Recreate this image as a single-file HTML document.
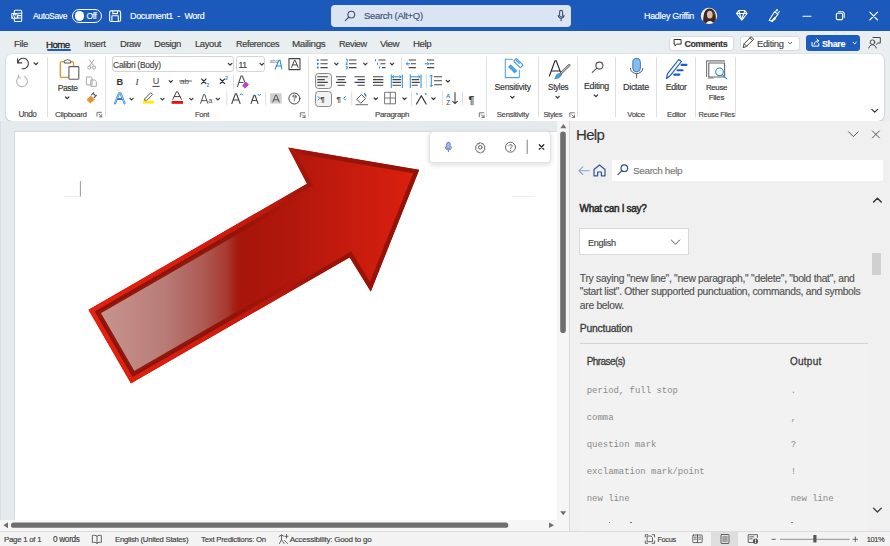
<!DOCTYPE html>
<html><head><meta charset="utf-8">
<style>
*{margin:0;padding:0;box-sizing:border-box}
html,body{width:890px;height:546px;overflow:hidden;background:#e6ebee;font-family:"Liberation Sans",sans-serif;color:#262626}
.a{position:absolute;white-space:nowrap;line-height:1;-webkit-text-stroke:.15px currentColor}
#ico{position:absolute;left:0;top:0}
.t{color:#fff}
.tab{font-size:8.9px;color:#3a3a3a;top:38.5px}
.lbl{font-size:7.3px;color:#444;top:110.7px}
.big{font-size:8.2px;color:#333}
.st{font-size:7.3px;color:#3e3e3e;top:535.5px}
.mono{font-family:"Liberation Mono",monospace;font-size:8.95px;color:#8a8a8a;margin-left:.7px;-webkit-text-stroke:0}
</style></head><body>
<!-- backgrounds -->
<div class="a" style="left:0;top:0;width:890px;height:31.5px;background:#1b59bb"></div>
<div class="a" style="left:0;top:31px;width:890px;height:90px;background:#e9eef1"></div>
<div class="a" style="left:6px;top:54px;width:878.4px;height:66.5px;background:#fff;border-radius:6px;box-shadow:0 0 0 .6px rgba(0,0,0,.07),0 1px 2px rgba(0,0,0,.16)"></div>
<div class="a" style="left:0;top:121px;width:569px;height:410px;background:#e4eaed"></div>
<div class="a" style="left:0;top:121px;width:1px;height:410px;background:#d9dfe2"></div>
<div class="a" style="left:14px;top:131px;width:544px;height:389px;background:#fff;border:1px solid #d6dbde;border-bottom:none;border-right:none;box-shadow:0 0 1px rgba(0,0,0,.06)"></div>
<div class="a" style="left:557px;top:121px;width:12px;height:410px;background:#f6f6f6"></div>
<div class="a" style="left:0;top:520px;width:557px;height:11px;background:#f6f6f6"></div>
<div class="a" style="left:569px;top:121px;width:321px;height:410px;background:#f0f0f0;border-left:1px solid #d9d9d9"></div>
<div class="a" style="left:0;top:531px;width:890px;height:15px;background:#f3f3f3;border-top:1px solid #dcdcdc"></div>
<div class="a" style="left:711px;top:532px;width:27px;height:14px;background:#dedede"></div>

<!-- title bar -->
<div class="a" style="left:72px;top:8.5px;width:30px;height:14.5px;border:1.3px solid #fff;border-radius:7.25px"></div>
<div class="a" style="left:74.5px;top:11px;width:9.6px;height:9.6px;background:#fff;border-radius:50%"></div>
<div class="a" style="left:331px;top:5px;width:240px;height:21.5px;background:#dbe4f2;border-radius:4px"></div>
<svg style="position:absolute;left:0;top:0" width="890" height="546"><defs><clipPath id="avc"><circle cx="709" cy="15.9" r="8.1"/></clipPath></defs><g clip-path="url(#avc)"><rect x="700" y="7" width="18" height="18" fill="#f2efed"/><path d="M703.2 24c-.3-4 .2-9 1.2-11.5c1-2.8 3-4 5.3-4c2.6 0 4.4 1.6 5.2 4.3c.9 3 1 7.5 1.8 11.2z" fill="#3b2a22"/><ellipse cx="709.8" cy="14.6" rx="2.9" ry="3.9" fill="#dfbba3"/><path d="M705.5 25c.6-2.6 2.2-4 4.3-4s3.6 1.4 4.2 4z" fill="#f6f4f2"/><path d="M713.5 11c1.5 2 2 5 2.2 9" stroke="#6b5030" stroke-width="1" fill="none"/></g></svg>

<!-- tab row buttons -->
<div class="a" style="left:669px;top:35.5px;width:65px;height:15px;background:#fff;border:1px solid #dadada;border-radius:3px"></div>
<div class="a" style="left:740px;top:35.5px;width:60px;height:15px;background:#fff;border:1px solid #dadada;border-radius:3px"></div>
<div class="a" style="left:806px;top:35px;width:54px;height:16px;background:#1d5cbd;border-radius:3px"></div>

<!-- ribbon boxes -->
<div class="a" style="left:112px;top:56px;width:122px;height:16px;border:1px solid #d4d4d4;border-radius:3px"></div>
<div class="a" style="left:236px;top:56px;width:29px;height:16px;border:1px solid #d4d4d4;border-radius:3px"></div>
<div class="a" style="left:314.5px;top:73.2px;width:17.4px;height:15.5px;border:1.4px solid #8a8a8a;border-radius:3.5px;background:#f3f3f3"></div>
<div class="a" style="left:314.5px;top:91px;width:17.4px;height:15.5px;border:1.4px solid #8a8a8a;border-radius:3.5px;background:#f3f3f3"></div>

<!-- help pane boxes -->
<div class="a" style="left:612px;top:159.5px;width:271px;height:21.5px;background:#fff"></div>
<div class="a" style="left:579px;top:228px;width:110px;height:26.5px;background:#fff;border:1px solid #d9d9d9"></div>
<div class="a" style="left:580px;top:343px;width:288px;height:1px;background:#d4d4d4"></div>
<div class="a" style="left:580px;top:344px;width:288px;height:187px;background:#f2f2f2"></div>
<div class="a" style="left:871.5px;top:253px;width:9px;height:22px;background:#d0d0d0"></div>

<!-- dictation toolbar -->
<div class="a" style="left:429px;top:130.5px;width:121.5px;height:32.5px;background:#fff;border:1px solid #e2e2e2;border-radius:4px;box-shadow:0 2px 5px rgba(0,0,0,.14)"></div>

<svg id="ico" width="890" height="546" viewBox="0 0 890 546" fill="none" stroke-linecap="round" stroke-linejoin="round">
<!-- title bar -->
<g stroke="#fff" stroke-width="1.1">
 <rect x="14.3" y="10.3" width="7.4" height="11.2" rx="1"/>
 <path d="M18.5 13.2h2M18.5 15.6h2M18.5 18h2"/>
 <rect x="109.6" y="10.9" width="11" height="10.6" rx="1.6"/>
 <path d="M112.8 11v2.6h4.7V11M111.9 21.4v-5.6h6.4v5.6"/>
 <path d="M736.5 13.5l2.2-3h6.2l2.2 3l-5.3 6.6zM736.5 13.5h10.6M739.5 13.5l2.1 6.4l2.1-6.4M738.7 10.6l1 2.9M744.9 10.6l-1 2.9"/>
 <path d="M769.2 20.2l5.3-8.4l3.6 2.4l-5.6 7.2zM775.8 11.2l.8-1.3M778.3 12.6l1.2-1M777.2 10.6l.3-1"/><path d="M771.6 20.8l3.2-3.6l.6 1.6z" fill="#fff" stroke-width=".8"/>
 <path d="M803 16.2h8"/>
 <rect x="836.3" y="13.3" width="6.3" height="6.3" rx="1.2"/>
 <path d="M838.4 11.8h3.8a2 2 0 0 1 2 2v3.8"/>
 <path d="M869.8 12.2l7.8 7.8M877.6 12.2l-7.8 7.8"/>
</g>
<rect x="11.2" y="12.9" width="7" height="5.9" rx=".6" fill="#fff"/>
<path d="M12.3 14.2l1.1 3.5l1.3-3l1.3 3l1.1-3.5" stroke="#1d5cbd" stroke-width=".9"/>
<g stroke="#3b5278" stroke-width="1.1">
 <circle cx="351.3" cy="14.6" r="3.4"/>
 <path d="M348.9 17l-3.6 3.6"/>
 <rect x="559.6" y="10.4" width="3" height="6.6" rx="1.5"/>
 <path d="M558.2 15.3a2.9 2.9 0 0 0 5.8 0M561.1 18.2v2.6"/>
</g>
<!-- tab row buttons -->
<g stroke="#333" stroke-width="1">
 <path d="M674.5 39.5h6.6v4.6h-4.3l-1.9 1.6v-1.6h-.4z"/>
 <path d="M743.2 47.3l1-3.6l7-7l2.5 2.5l-7 7zM744.2 43.7l2.5 2.5M750 37.9l2.5 2.5" stroke="#444"/>
 <path d="M788.5 42.3l1.6 1.6l1.6-1.6" stroke="#555"/>
</g>
<g stroke="#fff" stroke-width="1">
 <path d="M812 42.5v3.6h6.8v-2.5M814.2 44.4c.3-2.6 2-3.7 4.3-3.7M816.9 39l2 1.8l-2 1.8"/>
 <path d="M853 42.2l1.7 1.7l1.7-1.7"/>
</g>
<g stroke="#444" stroke-width="1">
 <path d="M873 37.5h7.3v5.5h-2.5l-1.6 1.5"/>
 <circle cx="872.5" cy="42.2" r="2.3"/>
 <path d="M868.8 48c.5-2 2-3.2 3.7-3.2s3.2 1.2 3.7 3.2"/>
</g>

<g id="ribbon-icons">
<!-- separators -->
<g stroke="#dedede" stroke-width="1" stroke-linecap="butt">
 <path d="M47.5 57v60M105.5 57v60M308.5 57v60M486.5 57v60M538.5 57v60M577.5 57v60M615.5 57v60M656.5 57v60M695.5 57v60M735.5 57v60"/>
 <path d="M233.5 74.5v14M226.8 91.5v14M265.7 91.5v14M401.5 57.5v13M426.5 74.5v14M351.7 91.5v14M411.5 91.5v14M442.6 91.5v14M462.5 91.5v14"/>
</g>
<!-- undo / redo -->
<g stroke="#3c3c3c" stroke-width="1.1">
 <path d="M17.6 58.7v4.2h4.2"/>
 <path d="M17.9 62.7a5.3 5.3 0 1 1 4.2 6"/>
 <path d="M34.2 63l1.7 1.7l1.7-1.7" stroke="#333" stroke-width="1.2"/>
</g>
<g stroke="#b5b5b5" stroke-width="1.1">
 <path d="M24.5 76.5a5.4 5.4 0 1 1-5.7 .4"/>
 <path d="M18.3 75v2.6h2.6" transform="rotate(10 19 77)"/>
</g>
<!-- paste -->
<rect x="60.3" y="61.6" width="13.2" height="15.8" rx="1.2" stroke="#e8912d" stroke-width="1.3"/>
<path d="M64.3 62.6v-1.3a1 1 0 0 1 1-1h1a1.3 1.3 0 0 1 2.4 0h1a1 1 0 0 1 1 1v1.3z" fill="#fff" stroke="#555" stroke-width="1"/>
<rect x="68.9" y="66.6" width="9.9" height="12.6" rx=".8" fill="#fff" stroke="#5a5a5a" stroke-width="1.1"/>
<path d="M65.5 97l1.7 1.7l1.7-1.7" stroke="#333" stroke-width="1.2"/>
<g stroke="#a8a8a8" stroke-width="1">
 <path d="M89.5 59.8l4.3 6.5M93.8 59.8l-4.3 6.5"/>
 <circle cx="89.3" cy="67.5" r="1.6"/><circle cx="94" cy="67.5" r="1.6"/>
 <path d="M86.8 77h4l1.3 1.3v6.6h-5.3z"/>
 <path d="M91.5 80h3.2l1.6 1.6v4.7h-5.5v-6.3"/>
</g>
<path d="M86.6 99.8l4.2-4.2l3.8 3.8l-4.2 4.2z" fill="#e8912d"/>
<path d="M91.5 94.8l2.2-2.2M94.2 97.5l2.2-2.2M93.3 93.5l1.9 1.9" stroke="#555" stroke-width="1.1"/>
<g stroke="#6a6a6a" stroke-width=".9">
 <path d="M97 116.3v-4h4.5M99 114.2l2.7 2.7M101.7 114.6v2.3h-2.3"/>
 <path d="M300.3 116.8v-4h4.5M302.3 114.7l2.7 2.7M305 115.1v2.3h-2.3"/>
 <path d="M479.3 116.8v-4h4.5M481.3 114.7l2.7 2.7M484 115.1v2.3h-2.3"/>
 <path d="M569.8 116.8v-4h4.5M571.8 114.7l2.7 2.7M574.5 115.1v2.3h-2.3"/>
</g>
<!-- font group -->
<g stroke="#333" stroke-width="1.2">
 <path d="M228.3 63.3l1.8 1.8l1.8-1.8M260 63.3l1.8 1.8l1.8-1.8"/>
 <path d="M169.2 80.7l1.6 1.6l1.6-1.6M129.9 98.3l1.6 1.6l1.6-1.6M160.8 98.3l1.6 1.6l1.6-1.6M189.7 98.3l1.6 1.6l1.6-1.6M216.2 98.3l1.6 1.6l1.6-1.6"/>
</g>
<text x="270" y="63.3" font-family="Liberation Sans" font-size="5" fill="#777" stroke="none">abc</text>
<path d="M275.2 69l3.6-8.8h1.2l1.8 8.8M277 66h4" stroke="#2b8ad8" stroke-width="1.1"/>
<rect x="289" y="58.6" width="11" height="11" stroke="#444" stroke-width="1.1"/>
<path d="M291.6 67.2l2.9-7h.6l2.9 7M292.7 64.9h4.2" stroke="#444" stroke-width="1"/>
<g fill="#333" stroke="none" font-family="Liberation Sans">
 <text x="116.6" y="84.6" font-size="9.2" font-weight="bold">B</text>
 <text x="135.6" y="84.6" font-size="9.2" font-style="italic" font-family="Liberation Serif">I</text>
 <text x="152.8" y="84" font-size="9" fill="#444">U</text>
</g>
<path d="M152.8 86.4h6.5" stroke="#444" stroke-width="1"/>
<text x="180" y="84" font-family="Liberation Sans" font-size="8" fill="#555" stroke="none">ab</text>
<path d="M179.5 81h12" stroke="#555" stroke-width=".9"/>
<path d="M201.6 79l4.4 4.6M206 79l-4.4 4.6M220.2 79l4.4 4.6M224.6 79l-4.4 4.6" stroke="#333" stroke-width="1.15"/>
<text x="206.6" y="86.6" font-family="Liberation Sans" font-size="4.6" font-weight="bold" fill="#2b8ad8" stroke="none">2</text>
<text x="225.2" y="79.6" font-family="Liberation Sans" font-size="4.6" font-weight="bold" fill="#2b8ad8" stroke="none">2</text>
<path d="M237.5 86.5l3.5-10.5h1.3l3.3 8M239 82.5h4" stroke="#555" stroke-width="1.1"/>
<path d="M242.8 85.5l3.2-3.2l2.3 2.3l-3.2 3.2z" fill="#c03cc8" stroke="#c03cc8" stroke-width="1"/>
<path d="M115 103.3l4-10h1.6l4 10M117 99h5.6" stroke="#2b7fd0" stroke-width="2.1"/>
<path d="M115 103.3l4-10h1.6l4 10" stroke="#fff" stroke-width=".6"/>
<path d="M145 98.5l5.8-5.8l1.8 1.8l-5.8 5.8h-1.8z" stroke="#555" stroke-width="1"/>
<rect x="143" y="100.8" width="10.8" height="2.8" fill="#ffe900"/>
<path d="M172.8 99.3l3.8-7.7h1l3.8 7.7M174.3 96.6h5.6" stroke="#444" stroke-width="1"/>
<rect x="171.6" y="101" width="11.4" height="2.8" fill="#e81010"/>
<path d="M200.6 103.3l3.1-8.8h1l3.1 8.8M201.7 100.6h5" stroke="#555" stroke-width="1"/>
<text x="208.3" y="103.3" font-family="Liberation Sans" font-size="7.6" fill="#555" stroke="none">a</text>
<path d="M231.8 103.5l3.6-9.8h1.1l3.6 9.8M233.2 100h5.6" stroke="#444" stroke-width="1.1"/>
<path d="M240 95l1.3-1.3l1.3 1.3" stroke="#2b8ad8" stroke-width="1"/>
<path d="M251 103.5l3-8.3h1l3 8.3M252.2 100.5h4.6" stroke="#444" stroke-width="1.1"/>
<path d="M258 94.2l1.3 1.3l1.3-1.3" stroke="#2b8ad8" stroke-width="1"/>
<rect x="270" y="93.3" width="11.7" height="10.3" fill="#cfcfcf"/>
<path d="M272.8 102l2.8-7h.8l2.8 7M273.8 99.8h4.4" stroke="#555" stroke-width="1"/>
<circle cx="294.4" cy="98.5" r="5.5" stroke="#444" stroke-width="1"/>
<path d="M292.5 96.2c.3-1.7 3.3-1.7 3.6 0c.2 1.2-1.6 1.7-1.7 3.3v1.3M293 96.8l3.6 .2" stroke="#555" stroke-width=".9"/>
<!-- paragraph -->
<g fill="#2b8ad8" stroke="none">
 <circle cx="317.8" cy="60" r="1.1"/><circle cx="317.8" cy="63.8" r="1.1"/><circle cx="317.8" cy="67.6" r="1.1"/>
</g>
<g stroke="#444" stroke-width="1.1" stroke-linecap="butt">
 <path d="M320.5 60h7.2M320.5 63.8h7.2M320.5 67.6h7.2"/>
 <path d="M349 60h7.5M349 63.8h7.5M349 67.6h7.5"/>
 <path d="M378.5 60h7M380.5 63.8h5M382 67.6h3.5"/>
 <path d="M408.7 60h7.2M411 63.8h4.9M408.7 67.6h7.2"/>
 <path d="M427 60h7.2M429.5 63.8h4.7M427 67.6h7.2"/>
 <path d="M317.3 76.8h10.5M317.3 79.6h7.5M317.3 82.4h10.5M317.3 85.2h7.5" stroke="#444"/>
 <path d="M336 76.8h10.2M337.5 79.6h7.2M336 82.4h10.2M337.5 85.2h7.2"/>
 <path d="M354.5 76.8h10.3M357.5 79.6h7.3M354.5 82.4h10.3M357.5 85.2h7.3"/>
 <path d="M373 76.8h10.3M373 79.6h10.3M373 82.4h10.3M373 85.2h10.3"/>
 <path d="M392.5 79.6h8.5M392.5 82.4h8.5M392.5 85.2h8.5"/>
 <path d="M411.7 79.6h7.5M411.7 82.4h8M411.7 85.2h6"/>
 <path d="M434 76.8h8M434 80.8h8M434 84.8h8"/>
</g>
<g stroke="#2b8ad8" stroke-width="1" stroke-linecap="butt">
 <path d="M346 59.2h1.2v2.6M345.8 63h1.6l-1.6 1.5h1.6M345.8 66.4h1.5v2.3h-1.5"/>
 <path d="M375.5 59.2v2M377.5 62.8v2M379.5 66.5v2"/>
 <path d="M406.3 63.8h4M407.8 62.3l-1.5 1.5l1.5 1.5"/>
 <path d="M424.7 63.8h4M427.2 62.3l1.5 1.5l-1.5 1.5"/>
 <path d="M391.3 74.5v13.5M402.3 74.5v13.5M392 76.8h9.5M394 75.5l-1.5 1.3l1.5 1.3M399.5 75.5l1.5 1.3l-1.5 1.3"/>
 <path d="M410.3 74.5v13.5M421 74.5v13.5M411 76.8h9.5M418.5 75.5l1.5 1.3l-1.5 1.3"/>
 <path d="M431.3 75v11.5M429.8 76.5l1.5-1.5l1.5 1.5M429.8 85l1.5 1.5l1.5-1.5"/>
 <path d="M317.8 96.3l2 2l-2 2"/>
 <path d="M345.7 96.3l-2 2l2 2"/>
</g>
<path d="M446.2 80.3l1.7 1.7l1.7-1.7M374 97.8l1.7 1.7l1.7-1.7M402.8 97.8l1.7 1.7l1.7-1.7M431.8 97.8l1.7 1.7l1.7-1.7M334.7 63.2l1.7 1.7l1.7-1.7M363.6 63.2l1.7 1.7l1.7-1.7M390.3 63.2l1.7 1.7l1.7-1.7" stroke="#333" stroke-width="1.2"/>
<text x="320.3" y="101.5" font-family="Liberation Sans" font-size="8" font-weight="bold" fill="#444" stroke="none">¶</text>
<text x="336.5" y="101.5" font-family="Liberation Sans" font-size="8" font-weight="bold" fill="#444" stroke="none">¶</text>
<path d="M357 99l4.5-4.5l4 4l-4.5 4.5z" stroke="#555" stroke-width="1"/>
<path d="M364.5 93.5l1.5 2.5" stroke="#2b6fc0" stroke-width="1.3"/>
<path d="M356 104.7h11.5" stroke="#888" stroke-width="1.2"/>
<rect x="385" y="92.3" width="10.5" height="11.5" stroke="#777" stroke-width="1"/>
<path d="M390.25 92.3v11.5M385 98h10.5" stroke="#777" stroke-width="1"/>
<path d="M416.5 104l4.8-8.3l4.8 8.3" stroke="#333" stroke-width="1.2"/>
<circle cx="417" cy="93.8" r=".9" fill="#2b8ad8" stroke="none"/><circle cx="425.8" cy="93.8" r=".9" fill="#2b8ad8" stroke="none"/>
<text x="446" y="97.5" font-family="Liberation Sans" font-size="6" font-weight="bold" fill="#2b8ad8" stroke="none">A</text>
<text x="446.3" y="104.7" font-family="Liberation Sans" font-size="6.5" fill="#444" stroke="none">Z</text>
<path d="M455 92.5v11M452.7 101.3l2.3 2.3l2.3-2.3" stroke="#444" stroke-width="1.1"/>
<text x="468.5" y="103.8" font-family="Liberation Sans" font-size="10.5" font-weight="bold" fill="#3a3a3a" stroke="none">¶</text>
<!-- sensitivity -->
<path d="M512.5 59.2h-7.2v18.4h14v-7.4" stroke="#4ba3e3" stroke-width="1.05"/>
<g transform="rotate(45 512.6 68.8)"><rect x="508" y="66.9" width="9.2" height="3.8" rx=".6" fill="#3f9be0"/><path d="M510.2 66.9v3.8M512.2 66.9v3.8M514.2 66.9v3.8" stroke="#9ccdf2" stroke-width=".5"/></g>
<g transform="rotate(45 518.3 63.1)"><rect x="513.6" y="61.2" width="9.4" height="3.8" rx=".6" stroke="#3f9be0" stroke-width="1.1" fill="#fff"/><path d="M514.2 62.6h5" stroke="#3f9be0" stroke-width="1.3"/></g>
<path d="M510.7 96.3l1.7 1.7l1.7-1.7M555.9 96.3l1.7 1.7l1.7-1.7M594.2 95l1.7 1.7l1.7-1.7" stroke="#333" stroke-width="1.2"/>
<!-- styles -->
<path d="M549.4 76l5.6-15.3h1.2l5.2 13.8M551.5 70.9h7.6" stroke="#222" stroke-width="1.05"/>
<path d="M569.3 65.2l-8.6 8.3" stroke="#555" stroke-width="2.4"/>
<path d="M569.3 65.2l-8.6 8.3" stroke="#fff" stroke-width=".9"/>
<path d="M560.6 73.2c-2.3-.5-4 .8-4.8 2.4l-1.6 3.6c3.2 .2 6.5-1.4 7.5-4.4z" fill="#3f9be0"/>
<!-- editing -->
<circle cx="599.4" cy="65.6" r="3.5" stroke="#555" stroke-width="1.1"/>
<path d="M596.9 68.1l-4.6 4.3" stroke="#555" stroke-width="1.1"/>
<!-- dictate -->
<rect x="632.8" y="58.3" width="7.6" height="13.6" rx="3.8" fill="#86bdec" stroke="#3c7dc9" stroke-width="1"/>
<path d="M630.4 68.4a6.2 5.2 0 0 0 12.4 0M636.6 73.6v4.3" stroke="#5a5a5a" stroke-width="1"/>
<!-- editor -->
<path d="M666.4 78.5l1.2-4.8l11.2-14.2l2.6 2l-11.2 14.2z" stroke="#1e5cc8" stroke-width="1.2"/>
<path d="M681.6 64.9h4.8M677.5 70.2h5M674.2 74.6h5.2" stroke="#1e5cc8" stroke-width="2.1"/>
<!-- reuse files -->
<path d="M706.6 76.5v-15.6h18" stroke="#777" stroke-width="1.1"/>
<rect x="708.8" y="63" width="15.8" height="14" fill="#fff" stroke="#666" stroke-width="1.1"/>
<path d="M708.2 78h5" stroke="#777" stroke-width="1.1"/>
<circle cx="719.5" cy="71.8" r="3.8" fill="#fff" stroke="#2b8ad8" stroke-width="1.1"/>
<path d="M722.3 74.6l4.4 4.2" stroke="#2b8ad8" stroke-width="1.1"/>
<path d="M871.8 109.3l2.9 2.9l2.9-2.9" stroke="#333" stroke-width="1.2"/>
</g>
<g id="doc-icons">
<path d="M80.4 181v15.6" stroke="#999" stroke-width="1" stroke-linecap="butt"/>
<path d="M64 196.5h15.5" stroke="#ececec" stroke-width="1" stroke-linecap="butt"/>
<path d="M512.5 196.5h22" stroke="#ececec" stroke-width="1" stroke-linecap="butt"/>
<!-- dictation toolbar -->
<g stroke="#5e7fc0" stroke-width="1">
 <rect x="446.7" y="142.3" width="3.4" height="6.6" rx="1.7" fill="#aac0e8"/>
 <path d="M445.3 147a3.1 3.1 0 0 0 6.2 0M448.4 150.1v1.6"/>
</g>
<g stroke="#666" stroke-width="1">
 <path d="M480.25 142.5l1.2 1.2h1.7l.5 1.6l1.4 1l-.6 1.6l.6 1.6l-1.4 1l-.5 1.6h-1.7l-1.2 1.2l-1.2-1.2h-1.7l-.5-1.6l-1.4-1l.6-1.6l-.6-1.6l1.4-1l.5-1.6h1.7z"/>
 <circle cx="480.25" cy="147.3" r="1.8"/>
 <circle cx="510.5" cy="147.2" r="5"/>
 <path d="M508.8 145.8c.2-1.6 3.4-1.6 3.4 .2c0 1.2-1.7 1.4-1.7 2.8M510.5 150.4v.2"/>
</g>
<path d="M527.2 140v13.5" stroke="#888" stroke-width="1.1"/>
<path d="M539.3 144.7l4.5 4.5M543.8 144.7l-4.5 4.5" stroke="#222" stroke-width="1.25"/>
<!-- help pane -->
<g stroke="#555" stroke-width="1">
 <path d="M848.6 131.8l4.8 4.8l4.8-4.8"/>
 <path d="M872.4 130.9l7 7M879.4 130.9l-7 7"/>
 <path d="M671.3 240l4.2 4.2l4.2-4.2"/>
 
</g>
<path d="M873.6 202l3.8-3.8l3.8 3.8" stroke="#333" stroke-width="1.5"/>
<path d="M873.6 508.3l3.8 3.8l3.8-3.8" stroke="#444" stroke-width="1.4"/>
<path d="M579 170.7h10.2M582.8 166.9l-3.8 3.8l3.8 3.8" stroke="#8ba2ca" stroke-width="1.1"/>
<path d="M594 169.5l5.5-4.5l5.5 4.5v6.3h-3.6v-3.8h-3.8v3.8h-3.6z" stroke="#2f5597" stroke-width="1.2"/>
<circle cx="624.3" cy="168.2" r="3.3" stroke="#2f4f80" stroke-width="1.2"/>
<path d="M621.9 170.6l-4 4" stroke="#2f4f80" stroke-width="1.2"/>
<!-- scrollbars -->
<g fill="#6e6e6e" stroke="none">
 <path d="M563.4 124l3 4.2h-6z"/>
 <rect x="560.2" y="131.5" width="5.6" height="201.5" rx="2.8"/>
 <path d="M563.2 515.2l3-4h-6z"/>
 <path d="M3.4 525.2l4.6-3v6z"/>
 <rect x="11" y="522.6" width="497.3" height="5.2" rx="2.6"/>
 <path d="M554 525.2l-5-2.7v5.4z"/>
</g>
<!-- status bar -->
<g stroke="#555" stroke-width=".9">
 <path d="M92.7 535.5c1.5-.5 3-.3 4.3 .8c1.3-1.1 2.8-1.3 4.3-.8v7c-1.5-.5-3-.3-4.3 .8c-1.3-1.1-2.8-1.3-4.3-.8zM97 536.3v7.3"/>
 <path d="M279 536.5l2.5-1.5l2.3 1.2M281.5 535v4.5l-2 4M281.5 539.5l2.5 4M286.5 534.6v3.5M285 536.3h3M284.5 540.5l3 3"/>
 <path d="M645.3 537v-2.3h2.3M652.3 534.7h2.3v2.3M654.6 541v2.3h-2.3M647.6 543.3h-2.3V541"/>
 <path d="M647.5 536h3.5l1.5 1.5v4.2h-5z"/>
 <rect x="692.8" y="535" width="9.4" height="7.6" rx=".6"/>
 <path d="M697.5 535v7.6M694.2 537.2h2M694.2 539.2h2M698.8 537.2h2M698.8 539.2h2"/>
 <rect x="721" y="534.5" width="8" height="9" rx=".6"/>
 <path d="M722.8 537h4.4M722.8 539h4.4M722.8 541h4.4"/>
 <path d="M754.5 542.5h-6.3v-7.8h9.2v3"/>
 <path d="M749.8 536.8h4M749.8 538.8h2.5"/>
 <path d="M772 539.3h3.4M853 539.3h4.6M855.3 537v4.6"/>
 <path d="M780.4 539.3h68.9" stroke="#777" stroke-width=".8"/>
</g>
<circle cx="755.5" cy="541.2" r="2.6" fill="#555"/>
<path d="M755.5 539.8v1.5M755.5 542.3v.3" stroke="#fff" stroke-width=".8"/>
<rect x="813.3" y="535" width="3.2" height="7.6" rx=".5" fill="#555"/>
</g>
</svg>

<!-- title text -->
<div class="a t" style="left:33px;top:11.73px;font-size:8.51px;letter-spacing:-0.347px">AutoSave</div>
<div class="a t" style="left:86.5px;top:11.73px;font-size:8.51px;letter-spacing:-0.368px">Off</div>
<div class="a t" style="left:130px;top:12.30px;font-size:8.96px;letter-spacing:-0.310px">Document1&nbsp; -&nbsp; Word</div>
<div class="a" style="left:364px;top:11.48px;font-size:9.52px;color:#3b5278;letter-spacing:-0.317px">Search (Alt+Q)</div>
<div class="a t" style="left:644px;top:12.31px;font-size:8.91px;letter-spacing:-0.269px">Hadley Griffin</div>

<!-- tabs -->
<div class="a tab" style="left:14px;font-size:9.42px;margin-top:0.48px;letter-spacing:-0.333px">File</div>
<div class="a tab" style="left:46px;font-size:9.74px;color:#222;-webkit-text-stroke:.3px #222;margin-top:1.46px;letter-spacing:-0.569px">Home</div>
<div class="a" style="left:46.5px;top:49px;width:24.5px;height:2px;background:#1d5cbd;border-radius:1px"></div>
<div class="a tab" style="left:84px;font-size:9.42px;margin-top:0.48px;letter-spacing:-0.310px">Insert</div>
<div class="a tab" style="left:120px;font-size:9.52px;margin-top:0.48px;letter-spacing:-0.482px">Draw</div>
<div class="a tab" style="left:154px;font-size:9.42px;margin-top:0.48px;letter-spacing:-0.386px">Design</div>
<div class="a tab" style="left:195px;font-size:9.42px;margin-top:0.48px;letter-spacing:-0.372px">Layout</div>
<div class="a tab" style="left:236px;font-size:9.1px;margin-top:1.49px;letter-spacing:-0.341px">References</div>
<div class="a tab" style="left:292px;font-size:9.84px;margin-top:0.46px;letter-spacing:-0.335px">Mailings</div>
<div class="a tab" style="left:339px;font-size:9.2px;margin-top:1.49px;letter-spacing:-0.393px">Review</div>
<div class="a tab" style="left:380px;font-size:9.74px;margin-top:0.46px;letter-spacing:-0.459px">View</div>
<div class="a tab" style="left:413px;font-size:9.63px;margin-top:0.47px;letter-spacing:-0.432px">Help</div>

<div class="a" style="left:684.5px;top:39.50px;font-size:8.95px;font-weight:bold;color:#333;letter-spacing:-0.436px">Comments</div>
<div class="a" style="left:757px;top:39.48px;font-size:9.42px;color:#444;letter-spacing:-0.316px">Editing</div>
<div class="a" style="left:822px;top:39.50px;font-size:9.04px;font-weight:bold;color:#fff;letter-spacing:-0.410px">Share</div>

<!-- ribbon labels -->
<div class="a lbl" style="left:18.5px;font-size:8.24px;margin-top:0.54px;letter-spacing:-0.430px">Undo</div>
<div class="a lbl" style="left:55px;font-size:8.03px;margin-top:0.55px;letter-spacing:-0.284px">Clipboard</div>
<div class="a lbl" style="left:195px;font-size:7.7px;margin-top:0.58px;letter-spacing:-0.334px">Font</div>
<div class="a lbl" style="left:375px;font-size:7.92px;margin-top:0.56px;letter-spacing:-0.304px">Paragraph</div>
<div class="a lbl" style="left:496.7px;font-size:7.7px;margin-top:0.58px;letter-spacing:-0.225px">Sensitivity</div>
<div class="a lbl" style="left:543.4px;font-size:7.49px;margin-top:0.59px;letter-spacing:-0.267px">Styles</div>
<div class="a lbl" style="left:627.2px;font-size:7.81px;margin-top:0.57px;letter-spacing:-0.312px">Voice</div>
<div class="a lbl" style="left:667px;font-size:7.81px;margin-top:0.57px;letter-spacing:-0.266px">Editor</div>
<div class="a lbl" style="left:698.5px;font-size:7.38px;margin-top:0.59px;letter-spacing:-0.253px">Reuse Files</div>

<div class="a big" style="left:57.7px;top:83.53px;font-size:8.45px;letter-spacing:-0.352px">Paste</div>
<div class="a" style="left:113px;top:60.53px;font-size:8.51px;color:#444;letter-spacing:-0.261px">Calibri (Body)</div>
<div class="a" style="left:238.5px;top:60.52px;font-size:8.77px;color:#444;letter-spacing:-0.592px">11</div>
<div class="a big" style="left:494.6px;top:82.72px;font-size:8.67px;letter-spacing:-0.257px">Sensitivity</div>
<div class="a big" style="left:548px;top:83.75px;font-size:8.13px;letter-spacing:-0.289px">Styles</div>
<div class="a big" style="left:584px;top:81.51px;font-size:8.85px;letter-spacing:-0.296px">Editing</div>
<div class="a big" style="left:623px;top:82.70px;font-size:9.01px;letter-spacing:-0.306px">Dictate</div>
<div class="a big" style="left:665.7px;top:82.72px;font-size:8.73px;letter-spacing:-0.298px">Editor</div>
<div class="a big" style="left:706px;top:84.06px;font-size:7.92px;letter-spacing:-0.376px">Reuse</div>
<div class="a big" style="left:708.8px;top:93.56px;font-size:7.92px;letter-spacing:-0.274px">Files</div>

<!-- help pane text -->
<div class="a" style="left:576px;top:127.17px;font-size:14.98px;color:#333;letter-spacing:-0.672px">Help</div>
<div class="a" style="left:633px;top:166.45px;font-size:9.95px;color:#7a7a7a;letter-spacing:-0.347px">Search help</div>
<div class="a" style="left:579.6px;top:204.09px;font-size:10.0px;color:#2b2b2b;letter-spacing:-0.329px;-webkit-text-stroke:.5px #2b2b2b">What can I say?</div>
<div class="a" style="left:588px;top:239.49px;font-size:9.14px;color:#444;letter-spacing:-0.328px">English</div>
<div class="a" style="left:579.8px;top:271.78px;font-size:10.3px;color:#525252;line-height:13.4px;letter-spacing:-0.281px">Try saying "new line", "new paragraph," "delete", "bold that", and<br>"start list". Other supported punctuation, commands, and symbols<br>are below.</div>
<div class="a" style="left:579.8px;top:323.53px;font-size:10.3px;color:#3a3a3a;letter-spacing:-0.178px;-webkit-text-stroke:.28px #3a3a3a">Punctuation</div>
<div class="a" style="left:586.7px;top:356.76px;font-size:10px;color:#3a3a3a;letter-spacing:-0.58px;-webkit-text-stroke:.28px #3a3a3a">Phrase(s)</div>
<div class="a" style="left:790px;top:357.49px;font-size:10.0px;color:#3a3a3a;letter-spacing:0.240px;-webkit-text-stroke:.28px #3a3a3a">Output</div>
<div class="a mono" style="left:586px;top:387px">period, full stop</div>
<div class="a mono" style="left:790px;top:387px">.</div>
<div class="a mono" style="left:586px;top:414px">comma</div>
<div class="a mono" style="left:790px;top:414px">,</div>
<div class="a mono" style="left:586px;top:441px">question mark</div>
<div class="a mono" style="left:790px;top:441px">?</div>
<div class="a mono" style="left:586px;top:468px">exclamation mark/point</div>
<div class="a mono" style="left:790px;top:468px">!</div>
<div class="a mono" style="left:586px;top:495px">new line</div>
<div class="a mono" style="left:790px;top:495px">new line</div>
<div class="a" style="left:608.5px;top:521.5px;width:1.5px;height:1.5px;background:#888"></div>
<div class="a" style="left:630px;top:521.5px;width:1.5px;height:1.5px;background:#777"></div>
<div class="a" style="left:791px;top:521.5px;width:1.5px;height:1.5px;background:#888"></div>

<!-- status -->
<div class="a st" style="left:4px;font-size:7.85px;margin-top:0.57px;letter-spacing:-0.261px">Page 1 of 1</div>
<div class="a st" style="left:53px;font-size:8.24px;margin-top:0.54px;letter-spacing:-0.315px">0 words</div>
<div class="a st" style="left:115px;font-size:7.7px;margin-top:0.58px;letter-spacing:-0.232px">English (United States)</div>
<div class="a st" style="left:201px;font-size:7.81px;margin-top:0.57px;letter-spacing:-0.240px">Text Predictions: On</div>
<div class="a st" style="left:289.7px;font-size:8.0px;margin-top:0.56px;letter-spacing:-0.237px">Accessibility: Good to go</div>
<div class="a st" style="left:657.4px;font-size:7.38px;margin-top:0.59px;letter-spacing:-0.327px">Focus</div>
<div class="a st" style="left:866.8px;font-size:7.49px;margin-top:0.59px;letter-spacing:-0.418px">101%</div>

<svg id="arw" width="890" height="546" viewBox="0 0 890 546" style="position:absolute;left:0;top:0">
<defs>
 <linearGradient id="af" gradientUnits="userSpaceOnUse" x1="90" y1="0" x2="420" y2="0"><stop offset="0" stop-color="#b8170d"/><stop offset="0.45" stop-color="#a6150b"/><stop offset="0.62" stop-color="#b3170c"/><stop offset="1" stop-color="#dc200f"/></linearGradient>
 <linearGradient id="as" gradientUnits="userSpaceOnUse" x1="90" y1="0" x2="420" y2="0"><stop offset="0" stop-color="#e5210f"/><stop offset="0.35" stop-color="#d41d0e"/><stop offset="0.55" stop-color="#bd180c"/><stop offset="0.68" stop-color="#9c1309"/><stop offset="1" stop-color="#931208"/></linearGradient>
 <linearGradient id="pf" gradientUnits="userSpaceOnUse" x1="98" y1="0" x2="260" y2="0"><stop offset="0" stop-color="#c8958f"/><stop offset="0.4" stop-color="#b97d78"/><stop offset="0.65" stop-color="#ad5a53"/><stop offset="0.8" stop-color="#a8382f"/><stop offset="0.9" stop-color="#a8150b" stop-opacity="0"/></linearGradient>
 <linearGradient id="ps" gradientUnits="userSpaceOnUse" x1="98" y1="0" x2="350" y2="0"><stop offset="0" stop-color="#8c1207" stop-opacity=".95"/><stop offset="0.5" stop-color="#8c1207" stop-opacity=".9"/><stop offset="0.7" stop-color="#941308" stop-opacity=".3"/><stop offset="0.85" stop-color="#9e1409" stop-opacity="0"/></linearGradient>
 <clipPath id="ac"><polygon points="88.4,309.8 306.9,183.7 288.1,147.6 419.3,169.8 370.8,291.8 349.6,257.4 130.9,383.4"/></clipPath>
</defs>
<polygon points="88.4,309.8 306.9,183.7 288.1,147.6 419.3,169.8 370.8,291.8 349.6,257.4 130.9,383.4" fill="url(#af)" stroke="url(#as)" stroke-width="9" stroke-linejoin="miter" clip-path="url(#ac)"/>
<polygon points="98.0,312.4 311.9,188.9 347.4,250.3 133.5,373.8" fill="url(#pf)" stroke="none"/>
<polyline points="311.9,188.9 98.0,312.4 133.5,373.8 347.4,250.3" fill="none" stroke="url(#ps)" stroke-width="4.4" stroke-linejoin="miter" clip-path="url(#ac)"/>
</svg>


</body></html>
